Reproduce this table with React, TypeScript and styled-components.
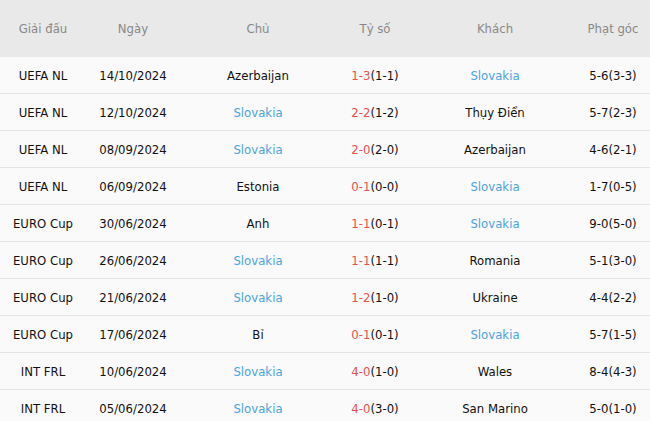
import React from "react";
import styled, { createGlobalStyle } from "styled-components";

const Global = createGlobalStyle`
  html, body { margin: 0; padding: 0; background: #fafafa; }
  body { font-family: "DejaVu Sans Condensed", "DejaVu Sans", Tahoma, sans-serif; }
`;

const cols = "86px 94px 156px 78px 162px 74px";

const Table = styled.div`
  width: 650px;
  overflow: hidden;
`;

const HeaderRow = styled.div`
  display: grid;
  grid-template-columns: ${cols};
  height: 57px;
  align-items: center;
  background: #e9e9e9;
`;

const HeadCell = styled.div`
  text-align: center;
  color: #888;
  font-size: 13px;
`;

const Row = styled.div`
  display: grid;
  grid-template-columns: ${cols};
  box-sizing: border-box;
  height: 37px;
  padding-top: 1px;
  align-items: center;
  background: #fafafa;
  border-bottom: 1px solid #e4e4e4;
`;

const Cell = styled.div<{ $tone?: "blue" | "plain" }>`
  text-align: center;
  font-size: 13px;
  color: ${(p) => (p.$tone === "blue" ? "#4ba3df" : "#111")};
  white-space: nowrap;
`;

const Red = styled.span`
  color: #e8504f;
`;

type M = [string, string, string, string, string, string, string];
const rows: M[] = [
  ["UEFA NL", "14/10/2024", "Azerbaijan", "1-3", "(1-1)", "Slovakia", "5-6(3-3)"],
  ["UEFA NL", "12/10/2024", "Slovakia", "2-2", "(1-2)", "Thụy Điển", "5-7(2-3)"],
  ["UEFA NL", "08/09/2024", "Slovakia", "2-0", "(2-0)", "Azerbaijan", "4-6(2-1)"],
  ["UEFA NL", "06/09/2024", "Estonia", "0-1", "(0-0)", "Slovakia", "1-7(0-5)"],
  ["EURO Cup", "30/06/2024", "Anh", "1-1", "(0-1)", "Slovakia", "9-0(5-0)"],
  ["EURO Cup", "26/06/2024", "Slovakia", "1-1", "(1-1)", "Romania", "5-1(3-0)"],
  ["EURO Cup", "21/06/2024", "Slovakia", "1-2", "(1-0)", "Ukraine", "4-4(2-2)"],
  ["EURO Cup", "17/06/2024", "Bỉ", "0-1", "(0-1)", "Slovakia", "5-7(1-5)"],
  ["INT FRL", "10/06/2024", "Slovakia", "4-0", "(1-0)", "Wales", "8-4(4-3)"],
  ["INT FRL", "05/06/2024", "Slovakia", "4-0", "(3-0)", "San Marino", "5-0(1-0)"],
];

const tone = (t: string) => (t === "Slovakia" ? "blue" : "plain");

export default function App() {
  return (
    <>
      <Global />
      <Table>
        <HeaderRow>
          <HeadCell>Giải đấu</HeadCell>
          <HeadCell>Ngày</HeadCell>
          <HeadCell>Chủ</HeadCell>
          <HeadCell>Tỷ số</HeadCell>
          <HeadCell>Khách</HeadCell>
          <HeadCell>Phạt góc</HeadCell>
        </HeaderRow>
        {rows.map((r, i) => (
          <Row key={i}>
            <Cell>{r[0]}</Cell>
            <Cell>{r[1]}</Cell>
            <Cell $tone={tone(r[2])}>{r[2]}</Cell>
            <Cell>
              <Red>{r[3]}</Red>
              {r[4]}
            </Cell>
            <Cell $tone={tone(r[5])}>{r[5]}</Cell>
            <Cell>{r[6]}</Cell>
          </Row>
        ))}
      </Table>
    </>
  );
}
